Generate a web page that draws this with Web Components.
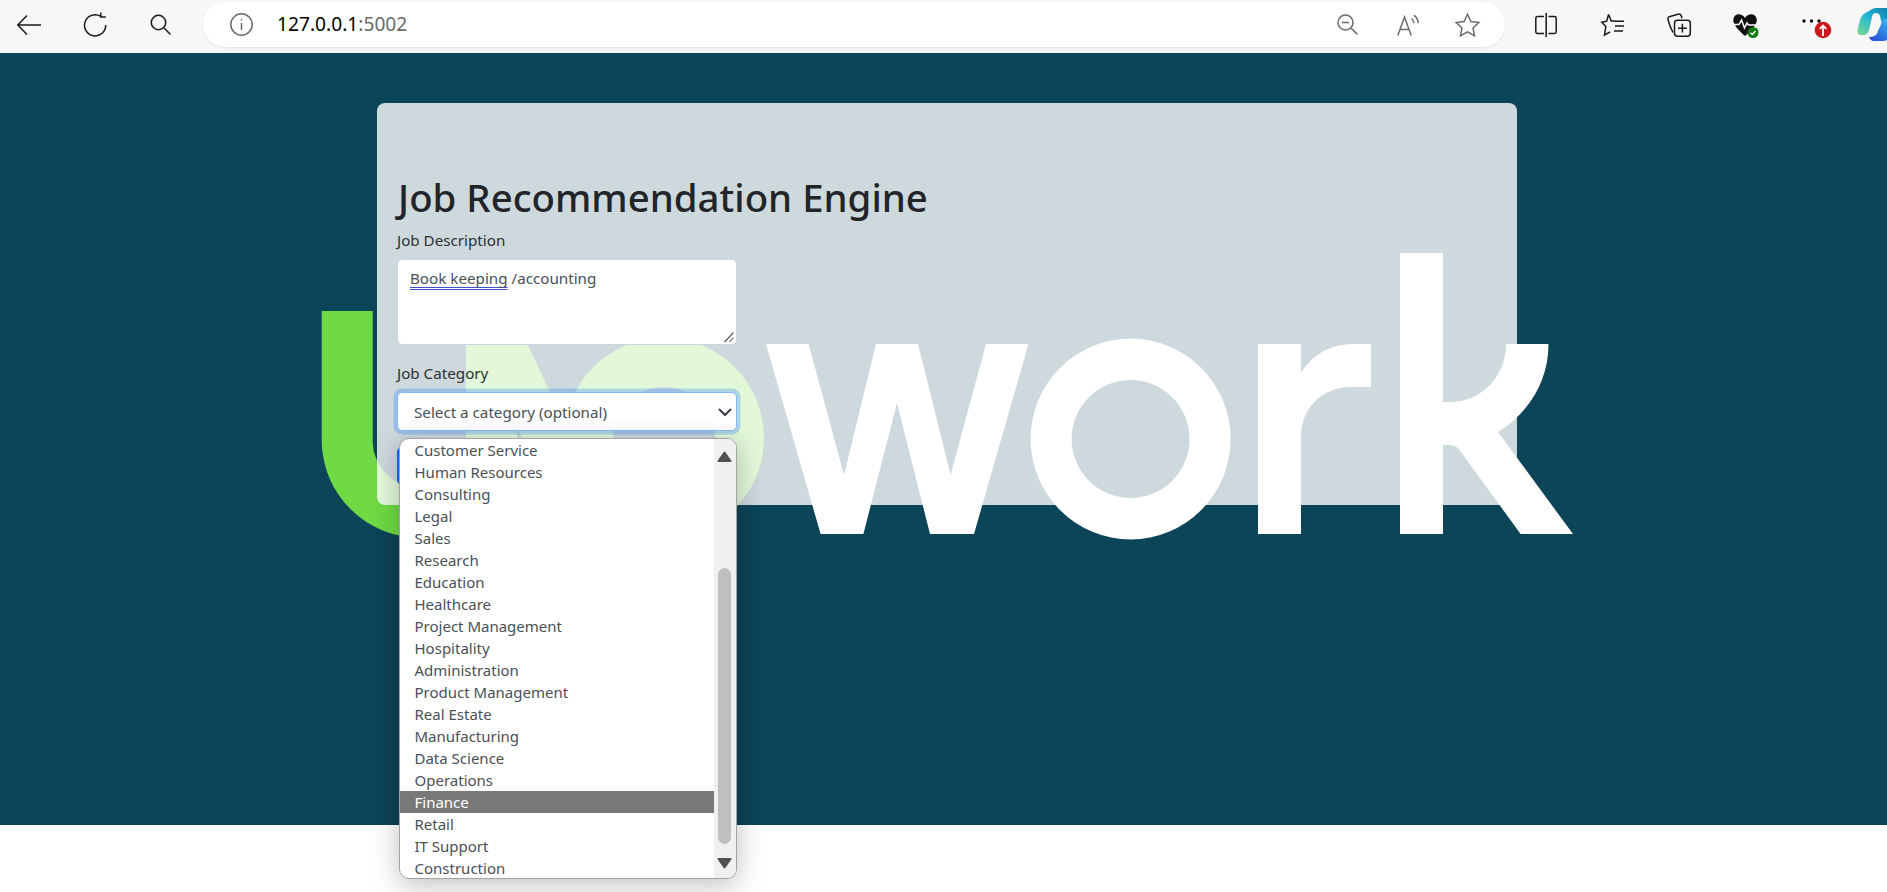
<!DOCTYPE html>
<html lang="en">
<head>
<meta charset="utf-8">
<title>Job Recommendation Engine</title>
<style>
    html, body {
        margin: 0;
        height: 892px;
        overflow: hidden;
        background: #fff;
        font-family: "Noto Sans", "Open Sans", sans-serif;
    }
</style>
</head>
<body>
<browser-toolbar url-host="127.0.0.1" url-port=":5002"></browser-toolbar>
<job-hero>
    <job-card heading="Job Recommendation Engine">
        <job-field label="Job Description">
            <job-textarea><span class="typo">Book keeping</span> /accounting</job-textarea>
        </job-field>
        <job-field label="Job Category">
            <job-select placeholder="Select a category (optional)">
                <select-option>Customer Service</select-option>
                <select-option>Human Resources</select-option>
                <select-option>Consulting</select-option>
                <select-option>Legal</select-option>
                <select-option>Sales</select-option>
                <select-option>Research</select-option>
                <select-option>Education</select-option>
                <select-option>Healthcare</select-option>
                <select-option>Project Management</select-option>
                <select-option>Hospitality</select-option>
                <select-option>Administration</select-option>
                <select-option>Product Management</select-option>
                <select-option>Real Estate</select-option>
                <select-option>Manufacturing</select-option>
                <select-option>Data Science</select-option>
                <select-option>Operations</select-option>
                <select-option selected>Finance</select-option>
                <select-option>Retail</select-option>
                <select-option>IT Support</select-option>
                <select-option>Construction</select-option>
            </job-select>
        </job-field>
    </job-card>
</job-hero>

<script>
const toolbarTemplate = document.createElement('template');
toolbarTemplate.innerHTML = `
    <style>
        :host {
            display: flex;
            align-items: center;
            box-sizing: border-box;
            height: 53px;
            padding-left: 17px;
            background: #f7f7f7;
            overflow: hidden;
        }
        svg { display: block; flex: none; fill: none; stroke: #1a1a1a; stroke-width: 1.5; overflow: visible; }
        .pill {
            display: flex;
            align-items: center;
            box-sizing: border-box;
            flex: none;
            width: 1302px;
            height: 45px;
            margin: -4px 0 0 32px;
            padding: 0 25px 0 27px;
            border-radius: 23px;
            background: #fff;
            box-shadow: 0 1px 3px rgba(0, 0, 0, .08);
        }
        .pill svg { stroke: #6b6b6b; }
        .url {
            margin: -1px 0 0 24px;
            font: 19.2px/24px "Noto Sans", sans-serif;
            color: #000;
        }
        .url span { color: #6a6a6a; }
        .end { display: flex; align-items: center; margin-left: auto; }
    </style>
    <svg width="24" height="20" viewBox="0 0 24 20" style="margin-top:-4px"><path d="M24 10H1M10 .5.8 10l9.2 9.5"/></svg>
    <svg width="24" height="24" viewBox="0 0 24 24" style="margin:-4px 0 0 42px"><path d="M17.500 3.200A10.600 10.600 0 1 0 22.700 12M17.800 -.5v4.400h5"/></svg>
    <svg width="21" height="21" viewBox="0 0 21 21" style="margin:-4px 0 0 43px"><circle cx="8.500" cy="8.500" r="7.200"/><path d="M13.800 13.800 20.500 20.500"/></svg>
    <div class="pill">
        <svg width="23" height="23" viewBox="0 0 23 23"><circle cx="11.500" cy="11.500" r="10.700"/><path d="M11.500 10v7M11.500 6v1.600"/></svg>
        <div class="url"><b style="font-weight:400" id="host"></b><span id="port"></span></div>
        <div class="end">
            <svg width="21" height="21" viewBox="0 0 21 21"><circle cx="8.500" cy="8.500" r="7.500"/><path d="M14 14l6.500 6.500M5 8.500h7"/></svg>
            <svg width="22" height="22" viewBox="0 0 22 22" style="margin-left:39px"><path d="M.8 21.500 7.500 3l6.700 18.500M3 15.500h9M14.500 4.500c1.600 1.200 2.300 2.600 2.500 4.600M17 1.200c2.600 1.900 4 4.800 4.200 8"/></svg>
            <svg width="25" height="24" viewBox="0 0 25 24" style="margin-left:36px"><path d="M12.500 1.200l3.400 7.300 7.900 1-5.800 5.400 1.500 7.900-7-3.900-7 3.900 1.500-7.900L1.200 9.500l7.900-1z"/></svg>
        </div>
    </div>
    <svg width="22" height="24" viewBox="0 0 22 24" style="margin:-4px 0 0 30px"><path d="M9 3.500H2.500A1.700 1.700 0 0 0 .8 5.200v13.600a1.700 1.700 0 0 0 1.700 1.700H9M13.500 3.500h6a1.700 1.700 0 0 1 1.700 1.700v13.600a1.700 1.700 0 0 1-1.700 1.700h-6M11.200 0v24"/></svg>
    <svg width="24" height="24" viewBox="0 0 24 24" style="margin:-4px 0 0 44px"><path d="M7.500 1.500 5.700 8.200.8 9.200l4 4.400-1.300 8.400 5.600-3.100M7.600 1.500l2.600 6.600h4M14 13h9M14 8.300h9M13 18h9"/></svg>
    <svg width="24" height="24" viewBox="0 0 24 24" style="margin:-4px 0 0 42px"><path d="M6 19.500C3.500 15 2 10.500 1 6.500c-.4-1.600.4-2.700 2-3.100l8-2.200c1.700-.4 3 .4 3.400 2l.5 2"/><rect x="7.500" y="7.200" width="15.800" height="16" rx="3"/><path d="M15.400 10.800v8.800M11 15.200h8.800"/></svg>
    <svg width="26" height="26" viewBox="0 0 26 26" style="margin:-1px 0 0 42px;stroke:none">
        <path fill="#111" d="M12 5C9-.2 1-.2.300 6.500c-.4 5.300 5.500 11 11.700 16.500C18.200 17.500 24.100 11.800 23.800 6.500 23-.2 15-.2 12 5z"/>
        <path fill="none" stroke="#fff" stroke-width="1.500" d="M0 11.500h6l2.500-4.500 3 8 2.500-5 1.500 2h8"/>
        <circle cx="20" cy="19.500" r="5.500" fill="#107c10"/>
        <path fill="none" stroke="#fff" stroke-width="1.300" d="M17.500 19.700l1.800 1.800 3.200-3.500"/>
    </svg>
    <svg width="34" height="28" viewBox="0 0 34 28" style="margin:-1px 0 0 42px;stroke:none">
        <circle cx="3" cy="9" r="1.700" fill="#111"/><circle cx="10.500" cy="9" r="1.700" fill="#111"/><circle cx="18" cy="9" r="1.700" fill="#111"/>
        <circle cx="22" cy="18" r="8.300" fill="#c8191b"/>
        <path fill="none" stroke="#fff" stroke-width="1.800" d="M22 24v-10M18.800 16.800l3.200-3.300 3.200 3.300"/>
    </svg>
    <svg width="38" height="34" viewBox="0 0 38 34" style="margin:-3px 0 0 22px;stroke:none">
        <defs>
            <linearGradient id="cpa" x1="0" y1="1" x2="1" y2="0"><stop offset="0" stop-color="#7fdc8c"/><stop offset=".5" stop-color="#1fb5d8"/><stop offset="1" stop-color="#0f6f9e"/></linearGradient>
            <linearGradient id="cpb" x1="0" y1="1" x2="1" y2="0"><stop offset="0" stop-color="#1f45d8"/><stop offset=".7" stop-color="#3a9de8"/><stop offset="1" stop-color="#7dd8f0"/></linearGradient>
        </defs>
        <path fill="url(#cpa)" d="M12 3C15 .5 18 0 21 0h9c3.500 0 5 3 6 7l2 14H26L23 8c-.5-2-2-3-4-3-2.500 0-3.500 1.500-4 4l-3 13c-1 3.500-3 5-5 5H4c-3 0-4-2.500-3.500-5L3 12C4 8 7 5 12 3z"/>
        <path fill="url(#cpb)" d="M21 23 26 12c1.500-1.500 3-1 6 0 3 1 6 2 6 2v6c0 5-2.500 9-6 11-2 1-4 2-7 2h-8c-3 0-4-2-5-4 5 0 8-2 9-6z"/>
    </svg>
`;

class BrowserToolbar extends HTMLElement {
    constructor() {
        super();
        this.attachShadow({ mode: 'open' });
        this.shadowRoot.appendChild(toolbarTemplate.content.cloneNode(true));
    }

    connectedCallback() {
        this.shadowRoot.querySelector('#host').textContent = this.getAttribute('url-host');
        this.shadowRoot.querySelector('#port').textContent = this.getAttribute('url-port');
    }
}

const heroTemplate = document.createElement('template');
heroTemplate.innerHTML = `
    <style>
        :host {
            display: block;
            position: relative;
            box-sizing: border-box;
            height: 772px;
            padding: 50px 0 0 377px;
            background: #0c4458;
        }
        /* logo sits behind the card, drawn in page coordinates */
        svg { position: absolute; left: 0; top: 0; width: 1887px; height: 772px; overflow: visible; }
        ::slotted(*) { position: relative; }
    </style>
    <svg viewBox="0 53 1887 772">
        <g fill="#6fda44" fill-rule="evenodd">
            <path d="M321.700 311H372.700V443A46.700 46.700 0 0 0 466 443V311H517V443A97.700 97.700 0 0 1 321.700 443Z"/>
            <path d="M511.600 311 600 497 560 510 517 428V311Z"/>
            <path d="M564 438a100 100 0 1 0 200 0a100 100 0 1 0-200 0ZM613 438a51 51 0 1 1 102 0a51 51 0 1 1-102 0Z"/>
        </g>
        <g fill="#fff" fill-rule="evenodd">
            <path d="M766 344H808.600L844 475 876 344H918L950.600 475 986 344H1028.500L974 534H930L897 403 863.400 534H820.600Z"/>
            <path d="M1030.600 439a100 100.500 0 1 0 200 0a100 100.500 0 1 0-200 0ZM1071.600 439a59 59 0 1 1 118 0a59 59 0 1 1-118 0Z"/>
            <path d="M1258 344H1301V373C1312 355 1330 344 1354 344H1371V387H1352C1320 387 1301 410 1301 437V534H1258Z"/>
            <path d="M1400 253H1443V402H1450C1480 402 1506 378 1506 344H1548.500C1548.500 380 1530 412 1498 432L1573 534H1520.600L1461 452C1458 447 1454 445 1449 445H1443V534H1400Z"/>
        </g>
    </svg>
    <slot></slot>
`;

class JobHero extends HTMLElement {
    constructor() {
        super();
        this.attachShadow({ mode: 'open' });
        this.shadowRoot.appendChild(heroTemplate.content.cloneNode(true));
    }
}

const cardTemplate = document.createElement('template');
cardTemplate.innerHTML = `
    <style>
        :host {
            display: block;
            box-sizing: border-box;
            width: 1140px;
            height: 402px;
            padding: 70px 20px 20px;
            border-radius: 8px;
            background: rgba(255, 255, 255, .8);
            color: #212529;
        }
        h1 {
            margin: 0 0 7px 1px;
            font-size: 38.400px;
            font-weight: 500;
            line-height: 48px;
        }
        button {
            display: block;
            width: 200px;
            height: 38px;
            padding: 0;
            border: 0;
            border-radius: 5px;
            background: #0d6efd;
        }
    </style>
    <h1 id="heading"></h1>
    <slot></slot>
    <button type="button" aria-hidden="true"></button>
`;

class JobCard extends HTMLElement {
    constructor() {
        super();
        this.attachShadow({ mode: 'open' });
        this.shadowRoot.appendChild(cardTemplate.content.cloneNode(true));
    }

    connectedCallback() {
        this.shadowRoot.querySelector('#heading').textContent = this.getAttribute('heading');
    }
}

const fieldTemplate = document.createElement('template');
fieldTemplate.innerHTML = `
    <style>
        :host { display: block; margin-bottom: 16px; }
        label {
            display: block;
            margin-bottom: 7px;
            font-size: 15.200px;
            line-height: 24px;
            color: #2b3035;
        }
    </style>
    <label id="label"></label>
    <slot></slot>
`;

class JobField extends HTMLElement {
    constructor() {
        super();
        this.attachShadow({ mode: 'open' });
        this.shadowRoot.appendChild(fieldTemplate.content.cloneNode(true));
    }

    connectedCallback() {
        this.shadowRoot.querySelector('#label').textContent = this.getAttribute('label');
    }
}

const textareaTemplate = document.createElement('template');
textareaTemplate.innerHTML = `
    <style>
        :host {
            display: block;
            position: relative;
            box-sizing: border-box;
            width: 340px;
            height: 86px;
            padding: 6px 12px;
            border: 1px solid #ced4da;
            border-radius: 5px;
            background: #fff;
            font-size: 15.200px;
            line-height: 24px;
            color: #495057;
        }
        ::slotted(.typo) {
            text-decoration: underline double #3b52d4;
            text-decoration-thickness: 1px;
            text-decoration-skip-ink: none;
            text-underline-offset: 3px;
        }
        svg { position: absolute; right: 1px; bottom: 1px; }
    </style>
    <slot></slot>
    <svg width="12" height="12" viewBox="0 0 12 12" fill="none" stroke="#555" stroke-width="1.100"><path d="M1.500 11 10.500 1.500M6.500 11 10.500 6.500"/></svg>
`;

class JobTextarea extends HTMLElement {
    constructor() {
        super();
        this.attachShadow({ mode: 'open' });
        this.shadowRoot.appendChild(textareaTemplate.content.cloneNode(true));
    }
}

const selectTemplate = document.createElement('template');
selectTemplate.innerHTML = `
    <style>
        :host { display: block; position: relative; width: 340px; }
        .box {
            display: flex;
            align-items: center;
            justify-content: space-between;
            box-sizing: border-box;
            height: 39px;
            padding: 0 3px 0 16px;
            border: 1px solid #86b7fe;
            border-radius: 5px;
            background: #fff;
            box-shadow: 0 0 0 3.500px rgba(13, 110, 253, .25);
            font-size: 15.200px;
            color: #495057;
        }
        /* the open list hangs over the form */
        .list {
            position: absolute;
            left: 1.500px;
            top: 45.500px;
            box-sizing: border-box;
            display: flex;
            width: 338px;
            height: 441px;
            border: 1.500px solid #a4a4a4;
            border-radius: 10px;
            background: #fff;
            box-shadow: 0 6px 28px rgba(0, 0, 0, .25);
            overflow: hidden;
        }
        .options { flex: 1; min-width: 0; overflow: hidden; }
        .bar {
            display: flex;
            flex-direction: column;
            align-items: center;
            flex: none;
            box-sizing: border-box;
            width: 22px;
            padding-top: 12px;
            background: #f0f0f0;
        }
        .thumb { width: 13px; height: 276px; margin: 106px 0 14px; border-radius: 7px; background: #bfbfbf; }
    </style>
    <div class="box">
        <span id="placeholder"></span>
        <svg width="16" height="16" viewBox="0 0 16 16" fill="none" stroke="#343a40" stroke-width="2" stroke-linecap="round" stroke-linejoin="round"><path d="M2.500 5.500 8 11l5.500-5.500"/></svg>
    </div>
    <div class="list">
        <div class="options"><slot></slot></div>
        <div class="bar">
            <svg width="15" height="11" viewBox="0 0 15 11"><path fill="#505050" stroke="#505050" stroke-linejoin="round" stroke-width="2" d="M7.500 1.500 1.500 10h12z"/></svg>
            <div class="thumb"></div>
            <svg width="15" height="11" viewBox="0 0 15 11"><path fill="#505050" stroke="#505050" stroke-linejoin="round" stroke-width="2" d="M7.500 9.500 1.500 1h12z"/></svg>
        </div>
    </div>
`;

class JobSelect extends HTMLElement {
    constructor() {
        super();
        this.attachShadow({ mode: 'open' });
        this.shadowRoot.appendChild(selectTemplate.content.cloneNode(true));
    }

    connectedCallback() {
        this.shadowRoot.querySelector('#placeholder').textContent = this.getAttribute('placeholder');
    }
}

const optionTemplate = document.createElement('template');
optionTemplate.innerHTML = `
    <style>
        :host {
            display: block;
            box-sizing: border-box;
            height: 22px;
            padding-left: 15px;
            font-size: 15px;
            line-height: 22px;
            white-space: nowrap;
            color: #495057;
        }
        :host([selected]) { background: #787878; color: #fff; }
    </style>
    <slot></slot>
`;

class SelectOption extends HTMLElement {
    constructor() {
        super();
        this.attachShadow({ mode: 'open' });
        this.shadowRoot.appendChild(optionTemplate.content.cloneNode(true));
    }
}

customElements.define('browser-toolbar', BrowserToolbar);
customElements.define('job-hero', JobHero);
customElements.define('job-card', JobCard);
customElements.define('job-field', JobField);
customElements.define('job-textarea', JobTextarea);
customElements.define('job-select', JobSelect);
customElements.define('select-option', SelectOption);
</script>
</body>
</html>
